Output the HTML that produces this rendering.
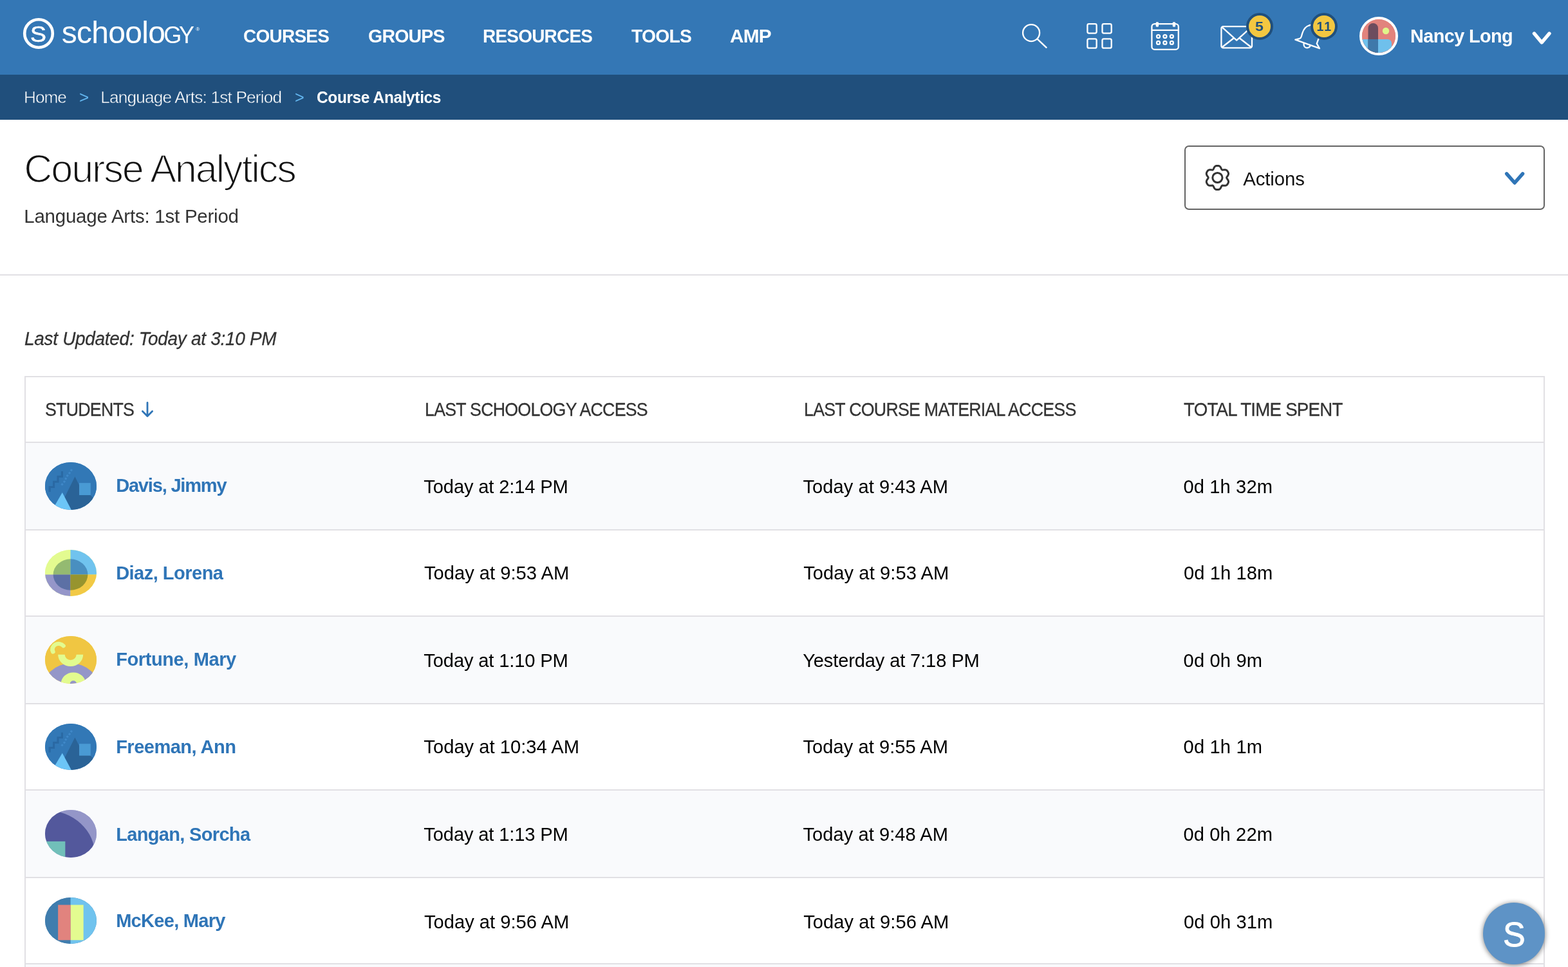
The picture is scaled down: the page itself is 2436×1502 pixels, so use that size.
<!DOCTYPE html>
<html lang="en">
<head>
<meta charset="utf-8">
<title>Course Analytics | Schoology</title>
<style>
*{box-sizing:border-box;margin:0;padding:0}
html,body{background:#fff}
body{font-family:"Liberation Sans",sans-serif;color:#000}
.page{position:relative;width:2436px;height:1502px;overflow:hidden;background:#fff;will-change:transform}
a{text-decoration:none;color:inherit}
.t{position:absolute;display:block;white-space:nowrap;line-height:1;transform-origin:0 0;font-weight:normal}
.b{font-weight:bold}
.i{font-style:italic}
.ico{position:absolute;overflow:visible}

/* top bar */
.top{position:absolute;left:0;top:0;width:2436px;height:116px;background:#3477b5;color:#fff}
.badge{position:absolute;width:42px;height:42px;border-radius:50%;background:#f3c741;border:4px solid #204f7c;color:#204f7c}
.badge .t{color:#204f7c}
.me{position:absolute;left:2112px;top:26px;width:60px;height:60px;border-radius:50%;border:4px solid #fff;overflow:hidden;background:#e2837d}
.me svg{display:block}

/* breadcrumbs */
.crumbs{position:absolute;left:0;top:116px;width:2436px;height:70px;background:#204f7c;color:#fff}
.crumbs .sep{color:#62b5ee}

/* page head */
.title{color:#111}
.sub{color:#333}
.actions{position:absolute;left:1840px;top:226px;width:560px;height:100px;border:2px solid #646464;border-radius:7px;background:#fff}
.actions .t{color:#111}
.rule{position:absolute;left:0;top:426px;width:2436px;height:2px;background:#e1e0e4}
.updated{color:#333}

/* table */
.grid{position:absolute;left:38px;top:584px;width:2362px;border:2px solid #e1e0e4;border-bottom:0;
  border-collapse:separate;border-spacing:0;table-layout:fixed}
.cell{position:relative;padding:0;height:inherit;border-bottom:2px solid #e1e0e4;text-align:left;font-weight:normal;vertical-align:top}
.row.alt .cell{background:#f9fafc}
.row.head .t{color:#333}
.av{position:absolute;width:80px;height:74px;border-radius:50%;overflow:hidden}
.av svg{display:block;width:100%;height:100%}
.name{color:#2f75b7}

/* floating help button */
.fab{position:absolute;left:2304px;top:1402px;width:96px;height:96px;border-radius:50%;background:#5e93c6;color:#fff;
  box-shadow:0 1px 7px 1px rgba(0,0,0,.42)}
</style>
</head>
<body>
<div class="page">

<header class="top">
<a href="#" class="logo">
<svg class="ico" style="left:35px;top:27px" width="50" height="50" viewBox="0 0 50 50"><circle cx="25" cy="25" r="21.8" fill="none" stroke="#fff" stroke-width="4.6"/></svg>
<span class="t" style="left:47.30px;top:36.00px;font-size:35.50px;letter-spacing:0.00px;transform:scaleX(1.0519);-webkit-text-stroke:0.7px #fff;">S</span>
<span class="t" style="left:95.80px;top:27.00px;font-size:48.00px;letter-spacing:-0.72px;">schoolo</span>
<span class="t" style="left:254.32px;top:37.00px;font-size:36.00px;letter-spacing:-4.20px;text-transform:uppercase;">gy</span>
<span class="t" style="left:304.3px;top:42px;font-size:8px">&reg;</span>
</a>
<nav class="nav">
<a class="t b" href="#" style="left:378.00px;top:41.00px;font-size:30.10px;letter-spacing:-0.80px;transform:scaleX(0.9296);">COURSES</a>
<a class="t b" href="#" style="left:572.00px;top:41.00px;font-size:30.10px;letter-spacing:-0.80px;transform:scaleX(0.9459);">GROUPS</a>
<a class="t b" href="#" style="left:750.35px;top:41.00px;font-size:30.10px;letter-spacing:-0.80px;transform:scaleX(0.9276);">RESOURCES</a>
<a class="t b" href="#" style="left:981.00px;top:41.00px;font-size:30.10px;letter-spacing:-0.80px;transform:scaleX(0.9394);">TOOLS</a>
<a class="t b" href="#" style="left:1133.51px;top:41.00px;font-size:30.10px;letter-spacing:-0.80px;transform:scaleX(0.9911);">AMP</a>
</nav>
<div class="tools">
<svg class="ico" style="left:1586px;top:34px" width="44" height="44" viewBox="0 0 44 44" fill="none" stroke="#fff" stroke-width="2.35" stroke-linecap="round"><circle cx="16.1" cy="17.1" r="13"/><path d="M25.6 26.6 L39.6 39.8"/></svg>
<svg class="ico" style="left:1686px;top:34px" width="44" height="44" viewBox="0 0 44 44" fill="none" stroke="#fff" stroke-width="2.3"><rect x="3.4" y="3.2" width="14.2" height="14.4" rx="2.3"/><rect x="26.5" y="3.2" width="14.2" height="14.4" rx="2.3"/><rect x="3.4" y="26.3" width="14.2" height="14.4" rx="2.3"/><rect x="26.5" y="26.3" width="14.2" height="14.4" rx="2.3"/></svg>
<svg class="ico" style="left:1786px;top:32px" width="48" height="48" viewBox="0 0 48 48" fill="none" stroke="#fff" stroke-width="2.3"><rect x="3.4" y="5.1" width="41.4" height="39.7" rx="4.4"/><path d="M3.4 14.9 H44.8"/><rect x="9.7" y="2.3" width="4.3" height="7.4" rx="1.4" fill="#fff" stroke="none"/><rect x="35.8" y="2.3" width="4.3" height="7.4" rx="1.4" fill="#fff" stroke="none"/><circle cx="13.5" cy="24.6" r="2.5"/><circle cx="23.9" cy="24.6" r="2.5"/><circle cx="34.4" cy="24.6" r="2.5"/><circle cx="13.5" cy="34.4" r="2.5"/><circle cx="23.9" cy="34.4" r="2.5"/><circle cx="34.4" cy="34.4" r="2.5"/></svg>
<svg class="ico" style="left:1894px;top:38px" width="54" height="40" viewBox="0 0 54 40" fill="none" stroke="#fff" stroke-width="2.3" stroke-linejoin="round"><rect x="3.4" y="3.2" width="47.6" height="33.2" rx="3"/><path d="M5 4.6 L27.2 24.6 L49.4 4.6"/><path d="M5 35 L23 21 M49.4 35 L31.4 21"/></svg>
<span class="badge" style="left:1936px;top:20px"><span class="t b" style="left:10.30px;top:8.00px;font-size:19.50px;letter-spacing:0.00px;transform:scaleX(1.1909);">5</span></span>
<svg class="ico" style="left:2010px;top:36px" width="46" height="44" viewBox="0 0 46 44" fill="none" stroke="#fff" stroke-width="2.3" stroke-linejoin="round" stroke-linecap="round"><path d="M30 2.6 C21 2.4 15.6 8 13.3 15.5 L11.7 21 C11.1 23 10 23.7 8.5 24.1 L2.4 25.7 L40 39.2 L35.7 31.6 L38.8 23.5"/><path d="M15.7 31.3 C14.9 36 17.5 38.5 20.8 38.3 C23.4 38.1 25 36.6 25.6 34.9"/></svg>
<span class="badge" style="left:2036px;top:20px"><span class="t b" style="left:5.59px;top:8.00px;font-size:19.50px;letter-spacing:1.87px;">11</span></span>
<span class="me"><svg width="52" height="52" viewBox="0 0 52 52"><rect width="52" height="52" fill="#e2837d"/><path d="M0 31 H40 a6 6 0 0 1 6 6 V52 H0 Z" fill="#6fc0ec"/><rect x="9.5" y="6" width="15.5" height="50" rx="7.7" fill="#6d4c5e"/><rect x="9.5" y="31" width="15.5" height="21" fill="#3f79aa"/><circle cx="37" cy="18" r="5.2" fill="#e0f58a"/></svg></span>
<span class="t b" style="left:2191.02px;top:42.00px;font-size:28.80px;letter-spacing:-0.57px;">Nancy Long</span>
<svg class="ico" style="left:2376px;top:44px" width="38" height="30" viewBox="0 0 38 30" fill="none" stroke="#fff" stroke-width="5.4" stroke-linecap="round" stroke-linejoin="round"><path d="M7.5 8 L19.2 22 L31 8"/></svg>
</div>
</header>
<nav class="crumbs">
<a class="t" href="#" style="left:37.00px;top:22.00px;font-size:26.20px;letter-spacing:-1.00px;-webkit-text-stroke:0.5px #204f7c;">Home</a>
<span class="t sep" style="left:122.70px;top:23.00px;font-size:25.60px;letter-spacing:0.00px;transform:scaleX(1.0154);">&gt;</span>
<a class="t" href="#" style="left:156.17px;top:22.00px;font-size:26.20px;letter-spacing:-0.81px;-webkit-text-stroke:0.5px #204f7c;">Language Arts: 1st Period</a>
<span class="t sep" style="left:457.90px;top:23.00px;font-size:25.60px;letter-spacing:0.00px;transform:scaleX(0.9823);">&gt;</span>
<span class="t b" style="left:492.01px;top:23.00px;font-size:25.87px;letter-spacing:-0.40px;transform:scaleX(0.9467);">Course Analytics</span>
</nav>
<main>
<h1 class="t title" style="left:37.34px;top:232.00px;font-size:61.20px;letter-spacing:-2.15px;-webkit-text-stroke:1.7px #fff;">Course Analytics</h1>
<p class="t sub" style="left:37.28px;top:321.00px;font-size:29.51px;letter-spacing:-0.24px;">Language Arts: 1st Period</p>
<div class="actions">
<svg class="ico" style="left:29px;top:26px" width="42" height="44" viewBox="0 0 42 44" fill="none" stroke="#333" stroke-width="3" stroke-linejoin="round"><path d="M34.62 22.00 L34.89 21.05 L35.61 20.00 L36.49 18.80 L37.19 17.50 L37.52 16.19 L37.45 14.94 L37.07 13.78 L36.52 12.69 L35.86 11.67 L35.04 10.76 L34.00 10.08 L32.69 9.71 L31.21 9.67 L29.74 9.83 L28.47 9.92 L27.51 9.69 L26.82 8.97 L26.27 7.82 L25.67 6.47 L24.90 5.21 L23.93 4.26 L22.81 3.70 L21.62 3.45 L20.40 3.38 L19.18 3.45 L17.99 3.70 L16.87 4.26 L15.90 5.21 L15.13 6.47 L14.53 7.82 L13.98 8.97 L13.29 9.69 L12.33 9.92 L11.06 9.83 L9.59 9.67 L8.11 9.71 L6.80 10.08 L5.76 10.76 L4.94 11.67 L4.28 12.69 L3.73 13.78 L3.35 14.94 L3.28 16.19 L3.61 17.50 L4.31 18.80 L5.19 20.00 L5.91 21.05 L6.18 22.00 L5.91 22.95 L5.19 24.00 L4.31 25.20 L3.61 26.50 L3.28 27.81 L3.35 29.06 L3.73 30.22 L4.28 31.31 L4.94 32.33 L5.76 33.24 L6.80 33.92 L8.11 34.29 L9.59 34.33 L11.06 34.17 L12.33 34.08 L13.29 34.31 L13.98 35.03 L14.53 36.18 L15.13 37.53 L15.90 38.79 L16.87 39.74 L17.99 40.30 L19.18 40.55 L20.40 40.62 L21.62 40.55 L22.81 40.30 L23.93 39.74 L24.90 38.79 L25.67 37.53 L26.27 36.18 L26.82 35.03 L27.51 34.31 L28.47 34.08 L29.74 34.17 L31.21 34.33 L32.69 34.29 L34.00 33.92 L35.04 33.24 L35.86 32.33 L36.52 31.31 L37.07 30.22 L37.45 29.06 L37.52 27.81 L37.19 26.50 L36.49 25.20 L35.61 24.00 L34.89 22.95Z"/><circle cx="20.4" cy="22" r="7.6"/></svg>
<span class="t" style="left:89.21px;top:35.00px;font-size:29.40px;letter-spacing:-0.12px;">Actions</span>
<svg class="ico" style="left:492px;top:36px" width="38" height="28" viewBox="0 0 38 28" fill="none" stroke="#2f75b7" stroke-width="5.5" stroke-linecap="round" stroke-linejoin="round"><path d="M6.7 5.9 L19.1 20 L31.6 5.9"/></svg>
</div>
<div class="rule"></div>
<p class="t updated i" style="left:38.05px;top:511.00px;font-size:29.40px;letter-spacing:-0.30px;transform:scaleX(0.9512);-webkit-text-stroke:0.3px #333;">Last Updated: Today at 3:10 PM</p>
<table class="grid">
<colgroup><col style="width:590px"><col style="width:589px"><col style="width:590px"><col style="width:589px"></colgroup>
<thead>
<tr class="row head" style="height:102px">
<th class="cell" scope="col"><span class="t" style="left:29.84px;top:35.00px;font-size:29.30px;letter-spacing:-0.80px;transform:scaleX(0.9121);-webkit-text-stroke:0.3px #333;">STUDENTS</span><svg class="ico" style="left:178px;top:36px" width="22" height="28" viewBox="0 0 22 28" fill="none" stroke="#2f75b7" stroke-width="2.8" stroke-linecap="round" stroke-linejoin="round"><path d="M11 3.4 V24 M3.4 16.8 L11 24.4 L18.6 16.8"/></svg></th>
<th class="cell" scope="col"><span class="t" style="left:29.81px;top:35.00px;font-size:29.30px;letter-spacing:-0.80px;transform:scaleX(0.9118);-webkit-text-stroke:0.3px #333;">LAST SCHOOLOGY ACCESS</span></th>
<th class="cell" scope="col"><span class="t" style="left:30.05px;top:35.00px;font-size:29.30px;letter-spacing:-0.80px;transform:scaleX(0.9126);-webkit-text-stroke:0.3px #333;">LAST COURSE MATERIAL ACCESS</span></th>
<th class="cell" scope="col"><span class="t" style="left:30.21px;top:35.00px;font-size:29.30px;letter-spacing:-0.80px;transform:scaleX(0.9440);-webkit-text-stroke:0.3px #333;">TOTAL TIME SPENT</span></th>
</tr>
</thead>
<tbody>
<tr class="row alt" style="height:136px">
<td class="cell">
<span class="av" style="left:30px;top:30px;height:74px"><svg viewBox="0 0 100 100" preserveAspectRatio="none"><defs><filter id="bl0" x="-10%" y="-10%" width="120%" height="120%"><feGaussianBlur stdDeviation="0.9"/></filter></defs><rect x="-10" y="-10" width="120" height="120" fill="#3278b6"/><g filter="url(#bl0)"><rect x="-10" y="-10" width="120" height="120" fill="#3278b6"/>
<path d="M9 62 V52 H17 V41 H25 V30 H33 V19" fill="none" stroke="#2b69a4" stroke-width="4"/>
<path d="M32 48 L38 40 L42 30 L48 22 L52 15" fill="none" stroke="#3f88c8" stroke-width="4" stroke-dasharray="4 3"/>
<path d="M58 30 L70 56 L88 69 L100 82 L100 110 L44 110 L38 74 Z" fill="#2a6397"/>
<rect x="66.3" y="43.5" width="22.2" height="25.5" fill="#4a9ad4"/>
<path d="M33.5 63.5 L14 100 L53 104 Z" fill="#6cc5f7"/></g></svg></span>
<a class="t b name" href="#" style="left:140.13px;top:52.00px;font-size:29.05px;letter-spacing:-1.20px;">Davis, Jimmy</a>
</td>
<td class="cell"><span class="t" style="left:28.36px;top:54.00px;font-size:29.10px;letter-spacing:-0.13px;">Today at 2:14 PM</span></td>
<td class="cell"><span class="t" style="left:28.44px;top:54.00px;font-size:29.10px;letter-spacing:0.05px;">Today at 9:43 AM</span></td>
<td class="cell"><span class="t" style="left:29.47px;top:54.00px;font-size:29.10px;letter-spacing:0.12px;">0d 1h 32m</span></td>
</tr>
<tr class="row" style="height:134px">
<td class="cell">
<span class="av" style="left:30px;top:30px;height:72px"><svg viewBox="0 0 100 100" preserveAspectRatio="none"><defs><filter id="bl1" x="-10%" y="-10%" width="120%" height="120%"><feGaussianBlur stdDeviation="0.9"/></filter></defs><rect x="-10" y="-10" width="120" height="120" fill="#e3fb90"/><g filter="url(#bl1)"><rect x="-10" y="-10" width="59.4" height="63.5" fill="#e3fb90"/><rect x="49.4" y="-10" width="60.6" height="63.5" fill="#6fc3ee"/>
<rect x="-10" y="53.5" width="59.4" height="56.5" fill="#9596c9"/><rect x="49.4" y="53.5" width="60.6" height="56.5" fill="#f2c944"/>
<path d="M49.4 19.9 A33.6 33.6 0 0 0 15.8 53.5 L49.4 53.5 Z" fill="#94ba71"/><path d="M49.4 19.9 A33.6 33.6 0 0 1 83 53.5 L49.4 53.5 Z" fill="#4a8fc0"/>
<path d="M15.8 53.5 A33.6 33.6 0 0 0 49.4 87.1 L49.4 53.5 Z" fill="#5c70a5"/><path d="M83 53.5 A33.6 33.6 0 0 1 49.4 87.1 L49.4 53.5 Z" fill="#97942d"/></g></svg></span>
<a class="t b name" href="#" style="left:140.13px;top:52.00px;font-size:29.05px;letter-spacing:-0.53px;">Diaz, Lorena</a>
</td>
<td class="cell"><span class="t" style="left:28.94px;top:52.00px;font-size:29.10px;letter-spacing:0.03px;">Today at 9:53 AM</span></td>
<td class="cell"><span class="t" style="left:29.18px;top:52.00px;font-size:29.10px;letter-spacing:0.08px;">Today at 9:53 AM</span></td>
<td class="cell"><span class="t" style="left:30.07px;top:52.00px;font-size:29.10px;letter-spacing:0.09px;">0d 1h 18m</span></td>
</tr>
<tr class="row alt" style="height:136px">
<td class="cell">
<span class="av" style="left:30px;top:30px;height:74px"><svg viewBox="0 0 100 100" preserveAspectRatio="none"><defs><filter id="bl2" x="-10%" y="-10%" width="120%" height="120%"><feGaussianBlur stdDeviation="0.9"/></filter></defs><rect x="-10" y="-10" width="120" height="120" fill="#f0c643"/><g filter="url(#bl2)"><rect x="-10" y="-10" width="120" height="120" fill="#f0c643"/>
<circle cx="50.4" cy="112.9" r="55.7" fill="#9496c8"/>
<path d="M15.4 33 A12 12 0 0 1 35.6 20.4" fill="none" stroke="#e2fb8f" stroke-width="8.4" stroke-linecap="round"/>
<path d="M31.8 39 A17.8 17.8 0 0 0 67.4 39" fill="none" stroke="#e2fb8f" stroke-width="13.2"/>
<circle cx="54.9" cy="100.2" r="15.3" fill="none" stroke="#e2fb8f" stroke-width="17.4"/></g></svg></span>
<a class="t b name" href="#" style="left:140.13px;top:52.00px;font-size:29.05px;letter-spacing:-0.41px;">Fortune, Mary</a>
</td>
<td class="cell"><span class="t" style="left:28.36px;top:54.00px;font-size:29.10px;letter-spacing:-0.13px;">Today at 1:10 PM</span></td>
<td class="cell"><span class="t" style="left:28.19px;top:54.00px;font-size:29.10px;letter-spacing:-0.14px;">Yesterday at 7:18 PM</span></td>
<td class="cell"><span class="t" style="left:29.53px;top:54.00px;font-size:29.10px;letter-spacing:0.18px;">0d 0h 9m</span></td>
</tr>
<tr class="row" style="height:134px">
<td class="cell">
<span class="av" style="left:30px;top:30px;height:72px"><svg viewBox="0 0 100 100" preserveAspectRatio="none"><defs><filter id="bl3" x="-10%" y="-10%" width="120%" height="120%"><feGaussianBlur stdDeviation="0.9"/></filter></defs><rect x="-10" y="-10" width="120" height="120" fill="#3278b6"/><g filter="url(#bl3)"><rect x="-10" y="-10" width="120" height="120" fill="#3278b6"/>
<path d="M9 62 V52 H17 V41 H25 V30 H33 V19" fill="none" stroke="#2b69a4" stroke-width="4"/>
<path d="M32 48 L38 40 L42 30 L48 22 L52 15" fill="none" stroke="#3f88c8" stroke-width="4" stroke-dasharray="4 3"/>
<path d="M58 30 L70 56 L88 69 L100 82 L100 110 L44 110 L38 74 Z" fill="#2a6397"/>
<rect x="66.3" y="43.5" width="22.2" height="25.5" fill="#4a9ad4"/>
<path d="M33.5 63.5 L14 100 L53 104 Z" fill="#6cc5f7"/></g></svg></span>
<a class="t b name" href="#" style="left:140.13px;top:52.00px;font-size:29.05px;letter-spacing:-0.52px;">Freeman, Ann</a>
</td>
<td class="cell"><span class="t" style="left:28.36px;top:52.00px;font-size:29.10px;letter-spacing:0.04px;">Today at 10:34 AM</span></td>
<td class="cell"><span class="t" style="left:28.44px;top:52.00px;font-size:29.10px;letter-spacing:0.05px;">Today at 9:55 AM</span></td>
<td class="cell"><span class="t" style="left:29.53px;top:52.00px;font-size:29.10px;letter-spacing:0.18px;">0d 1h 1m</span></td>
</tr>
<tr class="row alt" style="height:136px">
<td class="cell">
<span class="av" style="left:30px;top:30px;height:74px"><svg viewBox="0 0 100 100" preserveAspectRatio="none"><defs><filter id="bl4" x="-10%" y="-10%" width="120%" height="120%"><feGaussianBlur stdDeviation="0.9"/></filter></defs><rect x="-10" y="-10" width="120" height="120" fill="#9496c8"/><g filter="url(#bl4)"><rect x="-10" y="-10" width="120" height="120" fill="#9496c8"/>
<circle cx="2.3" cy="95.7" r="94.8" fill="#52589c"/><rect x="-10" y="66" width="49.2" height="50" fill="#71bfb9"/></g></svg></span>
<a class="t b name" href="#" style="left:140.13px;top:54.00px;font-size:29.05px;letter-spacing:-0.69px;">Langan, Sorcha</a>
</td>
<td class="cell"><span class="t" style="left:28.36px;top:54.00px;font-size:29.10px;letter-spacing:-0.13px;">Today at 1:13 PM</span></td>
<td class="cell"><span class="t" style="left:28.44px;top:54.00px;font-size:29.10px;letter-spacing:0.05px;">Today at 9:48 AM</span></td>
<td class="cell"><span class="t" style="left:29.47px;top:54.00px;font-size:29.10px;letter-spacing:0.12px;">0d 0h 22m</span></td>
</tr>
<tr class="row" style="height:134px">
<td class="cell">
<span class="av" style="left:30px;top:30px;height:72px"><svg viewBox="0 0 100 100" preserveAspectRatio="none"><defs><filter id="bl5" x="-10%" y="-10%" width="120%" height="120%"><feGaussianBlur stdDeviation="0.9"/></filter></defs><rect x="-10" y="-10" width="120" height="120" fill="#3f7dae"/><g filter="url(#bl5)"><rect x="-10" y="-10" width="59.5" height="120" fill="#3f7dae"/><rect x="49.5" y="-10" width="60.5" height="120" fill="#6fc3ee"/>
<rect x="25.2" y="16" width="24.6" height="76" fill="#e1837e"/><rect x="49.8" y="16" width="24.8" height="76" fill="#e3fb90"/></g></svg></span>
<a class="t b name" href="#" style="left:140.13px;top:52.00px;font-size:29.05px;letter-spacing:-0.72px;">McKee, Mary</a>
</td>
<td class="cell"><span class="t" style="left:28.94px;top:54.00px;font-size:29.10px;letter-spacing:0.03px;">Today at 9:56 AM</span></td>
<td class="cell"><span class="t" style="left:29.18px;top:54.00px;font-size:29.10px;letter-spacing:0.08px;">Today at 9:56 AM</span></td>
<td class="cell"><span class="t" style="left:30.07px;top:54.00px;font-size:29.10px;letter-spacing:0.09px;">0d 0h 31m</span></td>
</tr>
<tr class="row alt" style="height:136px">
<td class="cell"></td><td class="cell"></td><td class="cell"></td><td class="cell"></td>
</tr>
</tbody>
</table>
</main>
<div class="fab"><span class="t" style="left:31.34px;top:23.05px;font-size:54.50px;letter-spacing:0.00px;transform:scaleX(0.9547);-webkit-text-stroke:0.9px #fff;">S</span></div>
</div>
</body>
</html>
